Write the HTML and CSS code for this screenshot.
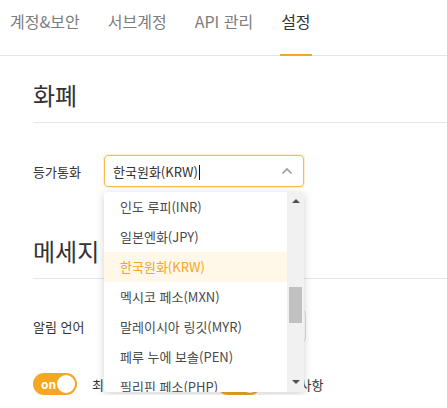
FILE: index.html
```html
<!DOCTYPE html>
<html lang="ko">
<head>
<meta charset="utf-8">
<link rel="stylesheet" href="styles.css">
</head>
<body>
<nav class="tabs">
  <a class="tab">계정&amp;보안</a>
  <a class="tab">서브계정</a>
  <a class="tab">API 관리</a>
  <a class="tab active">설정</a>
</nav>
<main class="content">
  <section class="section">
    <h2 class="section-title">화폐</h2>
    <div class="field">
      <label class="field-label">등가통화</label>
      <div class="select-wrap">
        <div class="select focused">
          <span class="select-value">한국원화(KRW)<span class="caret"></span></span>
          <svg class="chevron" width="12" height="8" viewBox="0 0 12 8"><path d="M1.5 6.5 L6 2 L10.5 6.5" fill="none" stroke="#9a9a9a" stroke-width="1.6"/></svg>
        </div>
        <div class="dropdown">
          <ul class="options">
            <li class="option">인도 루피(INR)</li>
            <li class="option">일본엔화(JPY)</li>
            <li class="option selected">한국원화(KRW)</li>
            <li class="option">멕시코 페소(MXN)</li>
            <li class="option">말레이시아 링깃(MYR)</li>
            <li class="option">페루 누에 보솔(PEN)</li>
            <li class="option">필리핀 페소(PHP)</li>
          </ul>
          <div class="scrollbar">
            <span class="arrow up"></span>
            <span class="thumb"></span>
            <span class="arrow down"></span>
          </div>
        </div>
      </div>
    </div>
  </section>
  <section class="section second">
    <h2 class="section-title">메세지</h2>
    <div class="field">
      <label class="field-label">알림 언어</label>
      <div class="select-wrap">
        <div class="select wide"><span class="select-value">한국어</span></div>
      </div>
    </div>
    <div class="toggle-row">
      <span class="toggle"><span class="toggle-text">on</span><span class="knob"></span></span>
      <span class="toggle-label first">최신 이벤트 및 소식</span>
      <span class="toggle"><span class="toggle-text">on</span><span class="knob"></span></span>
      <span class="toggle-label">공지사항</span>
    </div>
  </section>
</main>
</body>
</html>
```
FILE: styles.css
```css
* { box-sizing: border-box; }
body {
  margin: 0;
  font-family: "Noto Sans CJK KR", "Noto Sans", sans-serif;
  color: #333;
  background: #fff;
  overflow: hidden;
}
.tabs {
  display: flex;
  gap: 28px;
  height: 56px;
  padding: 8px 0 0 10px;
  border-bottom: 1px solid #e6e6e6;
}
.tab {
  position: relative;
  font-size: 16px;
  line-height: 26px;
  color: #7d7d7d;
  height: 47px;
}
.tab.active { color: #333; }
.tab.active::after {
  content: "";
  position: absolute;
  left: -1px;
  right: -1px;
  bottom: -1px;
  height: 2px;
  background: #f5a623;
}
.content { padding-left: 33px; }
.section-title {
  margin: 22px 0 0;
  font-size: 24px;
  font-weight: 400;
  line-height: 34px;
  padding-bottom: 10px;
  border-bottom: 1px solid #e6e6e6;
  color: #333;
}
.second .section-title { margin-top: 47px; }
.field {
  display: flex;
  align-items: center;
  margin-top: 32px;
}
.second .field { margin-top: 31px; }
.field-label {
  width: 71px;
  font-size: 13px;
  color: #333;
}
.select-wrap { position: relative; }
.select {
  width: 200px;
  height: 32px;
  border: 1px solid #dcdcdc;
  border-radius: 4px;
  display: flex;
  align-items: center;
  justify-content: space-between;
  padding: 0 10px 0 8px;
  font-size: 13px;
  color: #333;
}
.select.wide { width: 202px; }
.select.focused {
  border-color: #f7bb4d;
  box-shadow: 0 0 0 1px rgba(247, 187, 77, 0.25);
}
.caret {
  display: inline-block;
  width: 1px;
  height: 15px;
  background: #111;
  vertical-align: -3px;
  margin-left: 1px;
}
.chevron { display: block; }
.dropdown {
  position: absolute;
  top: 37px;
  left: 0;
  width: 200px;
  height: 200px;
  background: #fff;
  box-shadow: 0 2px 8px rgba(0, 0, 0, 0.18);
  border-radius: 3px;
  display: flex;
  overflow: hidden;
  z-index: 10;
}
.options {
  list-style: none;
  margin: 0;
  padding: 0;
  flex: 1;
}
.option {
  height: 30px;
  line-height: 30px;
  padding-left: 16px;
  font-size: 13px;
  color: #4a4a4a;
  white-space: nowrap;
}
.option.selected {
  background: #fff7e8;
  color: #f5a623;
}
.scrollbar {
  width: 17px;
  background: #f1f1f1;
  position: relative;
}
.arrow {
  position: absolute;
  left: 5px;
  width: 0;
  height: 0;
  border-left: 4px solid transparent;
  border-right: 4px solid transparent;
}
.arrow.up { top: 7px; border-bottom: 4px solid #505050; }
.arrow.down { bottom: 8px; border-top: 4px solid #505050; }
.thumb {
  position: absolute;
  left: 2px;
  right: 2px;
  top: 95px;
  height: 36px;
  background: #c1c1c1;
}
.toggle-row {
  display: flex;
  align-items: center;
  margin-top: 31px;
}
.toggle {
  position: relative;
  flex: none;
  width: 44px;
  height: 22px;
  border-radius: 11px;
  background: #f5a623;
  display: inline-flex;
  align-items: center;
}
.toggle-text {
  color: #fff;
  font-size: 12px;
  font-weight: 700;
  margin-left: 8px;
  line-height: 22px;
}
.knob {
  position: absolute;
  right: 2px;
  top: 2px;
  width: 18px;
  height: 18px;
  border-radius: 50%;
  background: #fff;
}
.toggle-label {
  font-size: 13px;
  color: #333;
  margin: 0 0 0 15px;
  white-space: nowrap;
}
.toggle-label.first { margin-right: 18px; }
```
